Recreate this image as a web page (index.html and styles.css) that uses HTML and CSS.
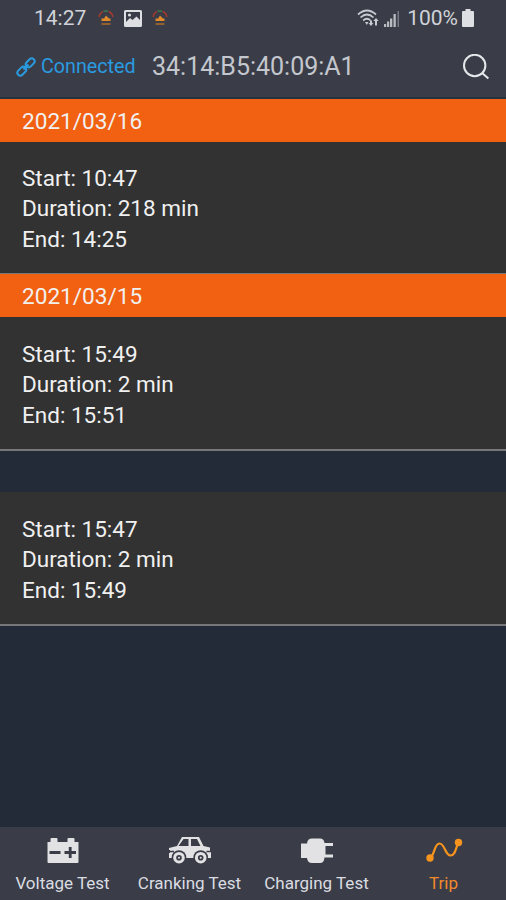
FILE: index.html
```html
<!DOCTYPE html>
<html lang="en">
<head>
<meta charset="utf-8">
<meta name="viewport" content="width=device-width, initial-scale=1">
<title>Trip</title>
<link rel="stylesheet" href="styles.css">
</head>
<body>

<header class="top">
  <div class="status-bar">
    <span class="clock">14:27</span>
    <svg class="gauge" width="16" height="18" viewBox="0 0 16 18" fill="none">
      <path d="M1.2 8A7 6.5 0 0 1 5 2.6" stroke="#a8392f" stroke-width="1.5"/>
      <path d="M5.5 2.3A7 6.5 0 0 1 10 2.2" stroke="#3d7a4d" stroke-width="1.5"/>
      <path d="M10.6 2.5A7 6.5 0 0 1 14.8 8" stroke="#a8392f" stroke-width="1.5"/>
      <path d="M8 6.500l3 3h1.500v2.500h-9V9.500H6z" fill="#e08a2c"/>
      <path d="M3.500 15h9" stroke="#a96a2b" stroke-width="1.600"/>
    </svg>
    <svg class="photo" width="18" height="17" viewBox="0 0 18 17">
      <path fill="#dedfe3" fill-rule="evenodd" d="M1.5 0h15Q18 0 18 1.5v14Q18 17 16.5 17h-15Q0 17 0 15.5v-14Q0 0 1.5 0zM2 2v10l4-4 2.500 2L12.500 6.500 16 10V2z"/>
      <circle cx="5.500" cy="5" r="1.600" fill="#dedfe3"/>
    </svg>
    <svg class="gauge" width="16" height="18" viewBox="0 0 16 18" fill="none">
      <path d="M1.2 8A7 6.5 0 0 1 5 2.6" stroke="#a8392f" stroke-width="1.5"/>
      <path d="M5.5 2.3A7 6.5 0 0 1 10 2.2" stroke="#3d7a4d" stroke-width="1.5"/>
      <path d="M10.6 2.5A7 6.5 0 0 1 14.8 8" stroke="#a8392f" stroke-width="1.5"/>
      <path d="M8 6.500l3 3h1.500v2.500h-9V9.500H6z" fill="#e08a2c"/>
      <path d="M3.500 15h9" stroke="#a96a2b" stroke-width="1.600"/>
    </svg>
    <div class="signals">
      <svg width="23" height="18" viewBox="0 0 23 18" fill="none" stroke="#c9cbd1" stroke-width="1.700">
        <path d="M1 5.500Q10 -2.500 19 5.500M3.500 8.500Q10 2.500 16.500 8.500M6.200 11.500Q10 8 13.500 11.500"/>
        <path d="M8 13h3.500l-1.700 3z" fill="#c9cbd1" stroke="none"/>
        <path d="M13 11.500h2v2.500h1.500L14 17l-2.500-3H13zM18 16.500V12h-1.700l2.700-3 2.700 3H20v4.500z" fill="#c9cbd1" stroke="none"/>
      </svg>
      <svg width="16" height="17" viewBox="0 0 16 17">
        <path fill="#b9bbc1" d="M0 14h2.200v3H0zM3 11.500h2.200V17H3zM6 8.500h2.300V17H6zM9.500 4h2.300v13H9.500z"/>
        <path fill="#777a83" d="M13.500 1h1.500v16h-1.500z"/>
      </svg>
      <span class="percent">100%</span>
      <svg class="battery" width="12" height="18" viewBox="0 0 12 18">
        <path fill="#dedfe3" d="M3.500 0h5v2H11q1 0 1 1v14q0 1-1 1H1q-1 0-1-1V3q0-1 1-1h2.500z"/>
      </svg>
    </div>
  </div>
  <div class="title-bar">
    <svg width="20" height="20" viewBox="0 0 20 20" fill="none" stroke="#2a9be0" stroke-width="2">
      <rect x="-5" y="-2.900" width="10" height="5.800" rx="2.900" transform="translate(5.800 14.200) rotate(-45)"/>
      <rect x="-5" y="-2.900" width="10" height="5.800" rx="2.900" transform="translate(14.200 5.800) rotate(-45)"/>
      <path d="M7.500 12.500l5-5"/>
    </svg>
    <span class="connected">Connected</span>
    <span class="address">34:14:B5:40:09:A1</span>
    <svg class="search" width="28" height="26" viewBox="0 0 28 26" fill="none" stroke="#e6e7ea" stroke-width="2">
      <circle cx="12.700" cy="11.500" r="10.700"/>
      <path d="M20.100 19l6.300 5.500"/>
    </svg>
  </div>
</header>

<main class="trips">
  <section class="trip">
    <h2 class="date">2021/03/16</h2>
    <div class="details">
      <p>Start: 10:47</p>
      <p>Duration: 218 min</p>
      <p>End: 14:25</p>
    </div>
  </section>
  <section class="trip">
    <h2 class="date">2021/03/15</h2>
    <div class="details">
      <p>Start: 15:49</p>
      <p>Duration: 2 min</p>
      <p>End: 15:51</p>
    </div>
  </section>
  <section class="trip">
    <div class="spacer"></div>
    <div class="details">
      <p>Start: 15:47</p>
      <p>Duration: 2 min</p>
      <p>End: 15:49</p>
    </div>
  </section>
</main>

<nav class="tabs">
  <a class="tab">
    <svg width="34" height="28" viewBox="0 0 34 28">
      <path fill="#e2e2e4" d="M4.500 2q0-1 1-1h5q1 0 1 1v3h-7zM21.500 2q0-1 1-1h5q1 0 1 1v3h-7z"/>
      <path fill="#e2e2e4" d="M1.500 5h31v20q0 1-1 1h-29q-1 0-1-1z"/>
      <path stroke="#3a3d47" stroke-width="2.800" d="M3.500 15.500h11M18.500 15.500h11.500M24.200 10v11"/>
    </svg>
    <span>Voltage Test</span>
  </a>
  <a class="tab">
    <svg width="44" height="28" viewBox="0 0 44 28">
      <path fill="#e2e2e4" fill-rule="evenodd" d="M14 0h17l4.500 9 6.500 1.500V15h1v6H1v-5h1v-3H1v-2l8-2zM15.500 2l-5 7H20.500V2zM23 2v7h9.500L29 2z"/>
      <path d="M1 14.500h5M38.500 14.500H43" stroke="#3a3d47" stroke-width="1.500"/>
      <circle cx="11" cy="20.500" r="7.300" fill="#3a3d47"/>
      <circle cx="32.700" cy="20.500" r="7.300" fill="#3a3d47"/>
      <circle cx="11" cy="20.700" r="4.300" fill="none" stroke="#e2e2e4" stroke-width="3"/>
      <circle cx="32.700" cy="20.700" r="4.300" fill="none" stroke="#e2e2e4" stroke-width="3"/>
      <circle cx="11" cy="20.700" r="1" fill="#e2e2e4"/>
      <circle cx="32.700" cy="20.700" r="1" fill="#e2e2e4"/>
    </svg>
    <span>Cranking Test</span>
  </a>
  <a class="tab">
    <svg width="34" height="28" viewBox="0 0 34 28">
      <path fill="#e2e2e4" d="M1 6.500h6Q7.500 1.500 12 1.500h8q4 0 4.500 4.500H33v3h-7.500v8.500H33v3h-8.500Q24 26 20 26h-8q-4.500 0-5-5H1z"/>
    </svg>
    <span>Charging Test</span>
  </a>
  <a class="tab active">
    <svg width="38" height="28" viewBox="0 0 38 28">
      <path fill="none" stroke="#f7941d" stroke-width="2.200" d="M5 21C10 18 9 6.500 14.500 6.500S20 18.500 25.500 18.500 31 9 33.500 5.500"/>
      <circle cx="5" cy="21" r="3.700" fill="#f7941d"/>
      <circle cx="33.500" cy="5.500" r="3.700" fill="#f7941d"/>
    </svg>
    <span>Trip</span>
  </a>
</nav>

</body>
</html>
```
FILE: styles.css
```css
* {
  box-sizing: border-box;
}
body {
  margin: 0;
  height: 900px;
  display: flex;
  flex-direction: column;
  background: #222b37;
  color: #f0f0f0;
  font-family: Roboto, sans-serif;
}
svg {
  display: block;
  flex: none;
}
h2, p {
  margin: 0;
  font-weight: normal;
}
.top {
  height: 99px;
  background: #3a3d47;
  border-bottom: 2px solid #263442;
}
.status-bar {
  display: flex;
  align-items: center;
  height: 36px;
  padding: 0 32px 0 34px;
  color: #d0d2d8;
  font-size: 21px;
}
.clock {
  width: 64px;
}
.photo {
  margin: 0 10px;
}
.signals {
  display: flex;
  align-items: center;
  gap: 4px;
  margin-left: auto;
}
.percent {
  margin-left: 3px;
}
.title-bar {
  display: flex;
  align-items: center;
  height: 61px;
  padding: 0 16px;
}
.connected {
  margin-left: 5px;
  width: 111px;
  color: #2a9be0;
  font-size: 19.7px;
}
.address {
  color: #c4c7cd;
  font-size: 25px;
}
.search {
  margin-left: auto;
}
.trips {
  flex: 1;
}
.date {
  height: 43px;
  padding-left: 22px;
  background: #f26011;
  font-size: 22.6px;
  line-height: 45px;
}
.spacer {
  height: 41px;
}
.details {
  height: 132px;
  padding: 21px 22px 0;
  background: #323232;
  border-bottom: 1px solid #777;
  font-size: 22.5px;
  line-height: 30.3px;
}
.trip + .trip .details {
  height: 134px;
  padding-top: 22px;
  border-bottom-width: 2px;
}
.tabs {
  display: grid;
  grid-template-columns: repeat(4, 127px);
  height: 73px;
  margin-left: -1px;
  background: #3a3d47;
}
.tab {
  display: flex;
  flex-direction: column;
  align-items: center;
  padding-top: 10px;
  color: #dadce2;
  font-size: 17px;
  line-height: 20px;
}
.tab span {
  margin-top: 8px;
}
.active {
  color: #f18a2b;
}
```
